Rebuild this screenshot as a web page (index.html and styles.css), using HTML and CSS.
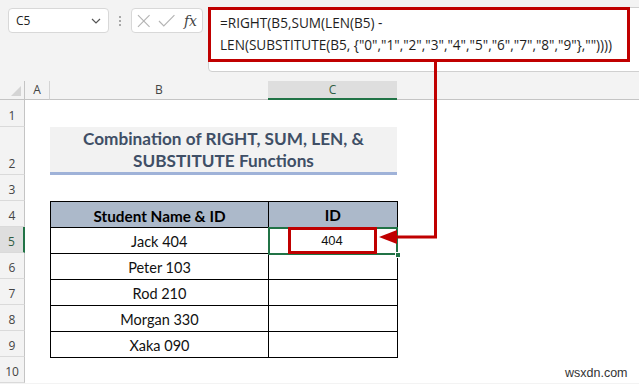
FILE: index.html
```html
<!DOCTYPE html>
<html>
<head>
<meta charset="utf-8">
<link rel="stylesheet" href="styles.css">
</head>
<body>
<div class="top">
  <div class="namebox">
    <span class="nb-text">C5</span>
    <svg class="chev" width="10" height="6" viewBox="0 0 10 6"><polyline points="1,1 5,5 9,1" fill="none" stroke="#555" stroke-width="1.2"/></svg>
  </div>
  <div class="dots"><i></i><i></i><i></i></div>
  <div class="fxbox">
    <svg width="14" height="14" viewBox="0 0 14 14"><path d="M1 1 L13 13 M13 1 L1 13" stroke="#b4b4b4" stroke-width="1.2" fill="none"/></svg>
    <svg width="18" height="14" viewBox="0 0 18 14"><polyline points="1,7 6,12 17,1" stroke="#b4b4b4" stroke-width="1.2" fill="none"/></svg>
    <span class="fx">fx</span>
  </div>
  <div class="fbar">
    <div class="formula">
      <div>=RIGHT(B5,SUM(LEN(B5) -</div>
      <div>LEN(SUBSTITUTE(B5, {"0","1","2","3","4","5","6","7","8","9"},""))))</div>
    </div>
  </div>
</div>

<div class="sheet">
  <div class="corner"><span class="tri"></span></div>
  <div class="colh ca">A</div>
  <div class="colh cb">B</div>
  <div class="colh cc sel">C</div>
  <div class="colh cd"></div>

  <div class="canvas"></div>

  <div class="rowh">1</div>
  <div class="rowh">2</div>
  <div class="rowh">3</div>
  <div class="rowh">4</div>
  <div class="rowh selr">5</div>
  <div class="rowh">6</div>
  <div class="rowh">7</div>
  <div class="rowh">8</div>
  <div class="rowh">9</div>
  <div class="rowh">10</div>

  <div class="title">Combination of RIGHT, SUM, LEN, &amp;<br>SUBSTITUTE Functions</div>

  <table class="data">
    <tr class="head"><th class="tb">Student Name &amp; ID</th><th class="tc">ID</th></tr>
    <tr><td>Jack 404</td><td class="active"><span class="hl">404</span><span class="handle"></span></td></tr>
    <tr><td>Peter 103</td><td></td></tr>
    <tr><td>Rod 210</td><td></td></tr>
    <tr><td>Morgan 330</td><td></td></tr>
    <tr><td>Xaka 090</td><td></td></tr>
  </table>
</div>

<svg class="arrow" width="639" height="384" viewBox="0 0 639 384">
  <polyline points="435.5,62 435.5,237 395,237" fill="none" stroke="#c00000" stroke-width="3"/>
  <polygon points="379,237 397,230 397,244" fill="#c00000"/>
</svg>

<div class="wm">wsxdn.com</div>
</body>
</html>
```

FILE: styles.css
```css
* { box-sizing: border-box; }
html, body { margin: 0; padding: 0; }
body {
  width: 639px;
  height: 384px;
  overflow: hidden;
  position: relative;
  background: #f3f3f3;
  font-family: "Open Sans", "Noto Sans", sans-serif;
  color: #222;
}

.top {
  display: flex;
  align-items: flex-start;
  height: 73px;
  padding: 7px 0 0 8px;
}
.namebox {
  margin-top: 1px;
  width: 101px;
  height: 25px;
  background: #fff;
  border: 1px solid #d8d8d8;
  border-radius: 4px;
  display: flex;
  align-items: center;
  justify-content: space-between;
  padding: 0 7px 0 7px;
}
.nb-text { font-size: 12px; color: #222; }
.chev { margin-top: 1px; }
.dots {
  width: 22px;
  height: 25px;
  margin-top: 1px;
  display: flex;
  flex-direction: column;
  align-items: center;
  justify-content: center;
  gap: 2px;
}
.dots i { display: block; width: 2px; height: 2px; background: #a8a8a8; }
.fxbox {
  margin-top: 1px;
  width: 72px;
  height: 25px;
  background: #fff;
  border: 1px solid #d8d8d8;
  border-radius: 4px;
  display: flex;
  align-items: center;
  padding: 0 5px 0 5px;
  gap: 7px;
}
.fx {
  font-family: "DejaVu Serif", "Liberation Serif", serif;
  font-style: italic;
  font-size: 14px;
  color: #444;
  margin-left: 2px;
}
.fbar {
  margin-left: 5px;
  flex: 1;
  height: 65px;
  margin-right: -10px;
  background: #fff;
  border: 1px solid #d0d0d0;
  border-radius: 4px;
}
.formula {
  margin: -1px 0 0 -1px;
  width: 422px;
  height: 55px;
  border: 3px solid #c00000;
  padding: 2px 0 0 9px;
  font-size: 13.6px;
  line-height: 22px;
  color: #1e1e1e;
  white-space: nowrap;
}

.sheet {
  margin-top: 8px;
  display: grid;
  grid-template-columns: 25px 25px 218px 129px 1fr;
  grid-template-rows: 19px 27px 48px repeat(8, 26px);
}
.corner {
  grid-row: 1; grid-column: 1;
  border-bottom: 1px solid #c4c4c4;
  border-right: 1px solid #c4c4c4;
  position: relative;
}
.tri {
  position: absolute;
  right: 3px;
  bottom: 3px;
  width: 0; height: 0;
  border-left: 10px solid transparent;
  border-bottom: 10px solid #d4d4d4;
}
.colh {
  grid-row: 1;
  border-bottom: 1px solid #c4c4c4;
  font-size: 12px;
  color: #444;
  display: flex;
  align-items: center;
  justify-content: center;
  line-height: 1;
}
.ca { grid-column: 2; border-right: 1px solid #d4d4d4; }
.cb { grid-column: 3; }
.cc { grid-column: 4; }
.cd { grid-column: 5; }
.colh.sel {
  background: #dedede;
  border-bottom: 2px solid #217346;
  color: #2f5d43;
}

.canvas {
  grid-column: 2 / -1;
  grid-row: 2 / -1;
  background: #fff;
}
.rowh {
  grid-column: 1;
  border-right: 1px solid #c4c4c4;
  border-bottom: 1px solid #dadada;
  font-size: 12px;
  color: #444;
  display: flex;
  align-items: flex-end;
  justify-content: center;
  padding-bottom: 2px;
  line-height: 16px;
}
.rowh.selr {
  background: #dedede;
  border-right: 2px solid #217346;
  color: #2f5d43;
}

.title {
  grid-column: 3 / 5;
  grid-row: 3;
  background: #f2f2f2;
  border-bottom: 3px solid #9fb2d8;
  font-family: "Lato", "Open Sans", sans-serif;
  font-weight: bold;
  font-size: 17.2px;
  line-height: 22px;
  color: #3f4f66;
  text-align: center;
  padding-top: 1px;
}

.data {
  grid-column: 3 / 5;
  grid-row: 5 / 11;
  border-collapse: collapse;
  width: 348px;
  height: 157px;
  font-family: "Lato", "Open Sans", sans-serif;
  font-size: 14.5px;
  color: #111;
  table-layout: fixed;
}
.data th, .data td {
  border: 1px solid #000;
  padding: 2px 0 0 0;
  text-align: center;
  height: 26px;
  vertical-align: middle;
}
.data th { background: #acb9ca; font-weight: bold; font-size: 15.3px; color: #000; }
.data th.tb { width: 218px; }
.data td.active {
  position: relative;
  border: 2px solid #217346;
}
.hl {
  position: absolute;
  left: 18px;
  top: -2px;
  width: 89px;
  height: 27px;
  border: 3px solid #c00000;
  font-family: "Liberation Sans", Arial, sans-serif;
  font-size: 13px;
  line-height: 21px;
  color: #111;
}
.handle {
  position: absolute;
  right: -5px;
  bottom: -5px;
  width: 6px;
  height: 6px;
  background: #217346;
  border: 1px solid #fff;
}

.arrow {
  position: absolute;
  left: 0;
  top: 0;
  pointer-events: none;
}
.wm {
  position: absolute;
  left: 565px;
  top: 366px;
  font-family: "Liberation Sans", Arial, sans-serif;
  font-size: 12.5px;
  color: #333;
}
```
